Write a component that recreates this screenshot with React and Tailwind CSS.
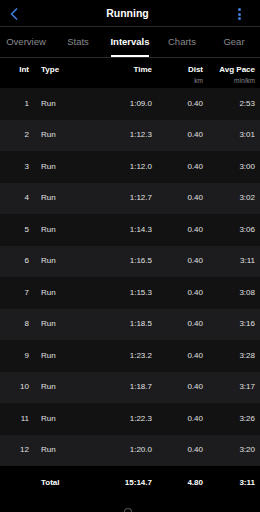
import React from 'react'
import { ChevronLeft } from 'lucide-react'

const laps = [
  ['1', '1:09.0', '0.40', '2:53'],
  ['2', '1:12.3', '0.40', '3:01'],
  ['3', '1:12.0', '0.40', '3:00'],
  ['4', '1:12.7', '0.40', '3:02'],
  ['5', '1:14.3', '0.40', '3:06'],
  ['6', '1:16.5', '0.40', '3:11'],
  ['7', '1:15.3', '0.40', '3:08'],
  ['8', '1:18.5', '0.40', '3:16'],
  ['9', '1:23.2', '0.40', '3:28'],
  ['10', '1:18.7', '0.40', '3:17'],
  ['11', '1:22.3', '0.40', '3:26'],
  ['12', '1:20.0', '0.40', '3:20']
]

const tabs = ['Overview', 'Stats', 'Intervals', 'Charts', 'Gear']

export default function App() {
  return (
    <div className="w-[260px] h-[512px] bg-black text-white overflow-hidden flex flex-col" style={{ fontFamily: '"Liberation Sans", Arial, sans-serif' }}>
      {/* Top bar */}
      <div className="h-[27px] flex items-center justify-between pl-[4px] pr-[11px] pt-[2px] border-b border-[#2a2a2c]">
        <ChevronLeft size={20} strokeWidth={2} className="text-[#3d7fd9]" />
        <div className="text-[10.5px] font-bold">Running</div>
        <div className="w-[18px] flex flex-col items-center gap-[1.5px]">
          <span className="w-[3px] h-[3px] rounded-full bg-[#3d7fd9]" />
          <span className="w-[3px] h-[3px] rounded-full bg-[#3d7fd9]" />
          <span className="w-[3px] h-[3px] rounded-full bg-[#3d7fd9]" />
        </div>
      </div>

      {/* Tabs */}
      <div className="h-[31px] grid grid-cols-5 border-b border-[#2a2a2c]">
        {tabs.map(t => {
          const active = t === 'Intervals'
          return (
            <div key={t} className="relative flex items-center justify-center">
              <span className={active ? 'text-[9.5px] font-bold text-white' : 'text-[9.5px] text-[#8a8a8e]'}>{t}</span>
              {active && <span className="absolute bottom-0 left-[7px] right-[7px] h-[2px] bg-white" />}
            </div>
          )
        })}
      </div>

      {/* Column header */}
      <div className="h-[30px] flex pr-[5px] pt-[6px] text-[8px] font-bold">
        <div className="w-[29px] text-right">Int</div>
        <div className="flex-1 pl-[12px]">Type</div>
        <div className="w-[60px] text-right">Time</div>
        <div className="w-[51px] text-right flex flex-col">
          <span>Dist</span>
          <span className="text-[6.5px] font-normal text-[#8a8a8e]">km</span>
        </div>
        <div className="w-[52px] text-right flex flex-col">
          <span>Avg Pace</span>
          <span className="text-[6.5px] font-normal text-[#8a8a8e]">min/km</span>
        </div>
      </div>

      {/* Rows */}
      <div className="flex flex-col">
        {laps.map(([n, time, dist, pace], i) => (
          <div key={n} className={`h-[31.5px] flex items-center pr-[5px] text-[8px] text-[#e0e0e0] ${i % 2 === 0 ? 'bg-[#121212]' : 'bg-[#1c1c1e]'}`}>
            <div className="w-[29px] text-right">{n}</div>
            <div className="flex-1 pl-[12px]">Run</div>
            <div className="w-[60px] text-right">{time}</div>
            <div className="w-[51px] text-right">{dist}</div>
            <div className="w-[52px] text-right">{pace}</div>
          </div>
        ))}
      </div>

      {/* Total */}
      <div className="h-[33px] flex items-center pr-[5px] text-[8px] font-bold">
        <div className="w-[29px]" />
        <div className="flex-1 pl-[12px]">Total</div>
        <div className="w-[60px] text-right">15:14.7</div>
        <div className="w-[51px] text-right">4.80</div>
        <div className="w-[52px] text-right">3:11</div>
      </div>

      <div className="flex-1 flex items-end justify-center pr-[4px]">
        <div className="w-[8px] h-[4px] rounded-t-full border-t border-x border-[#555]" />
      </div>
    </div>
  )
}
